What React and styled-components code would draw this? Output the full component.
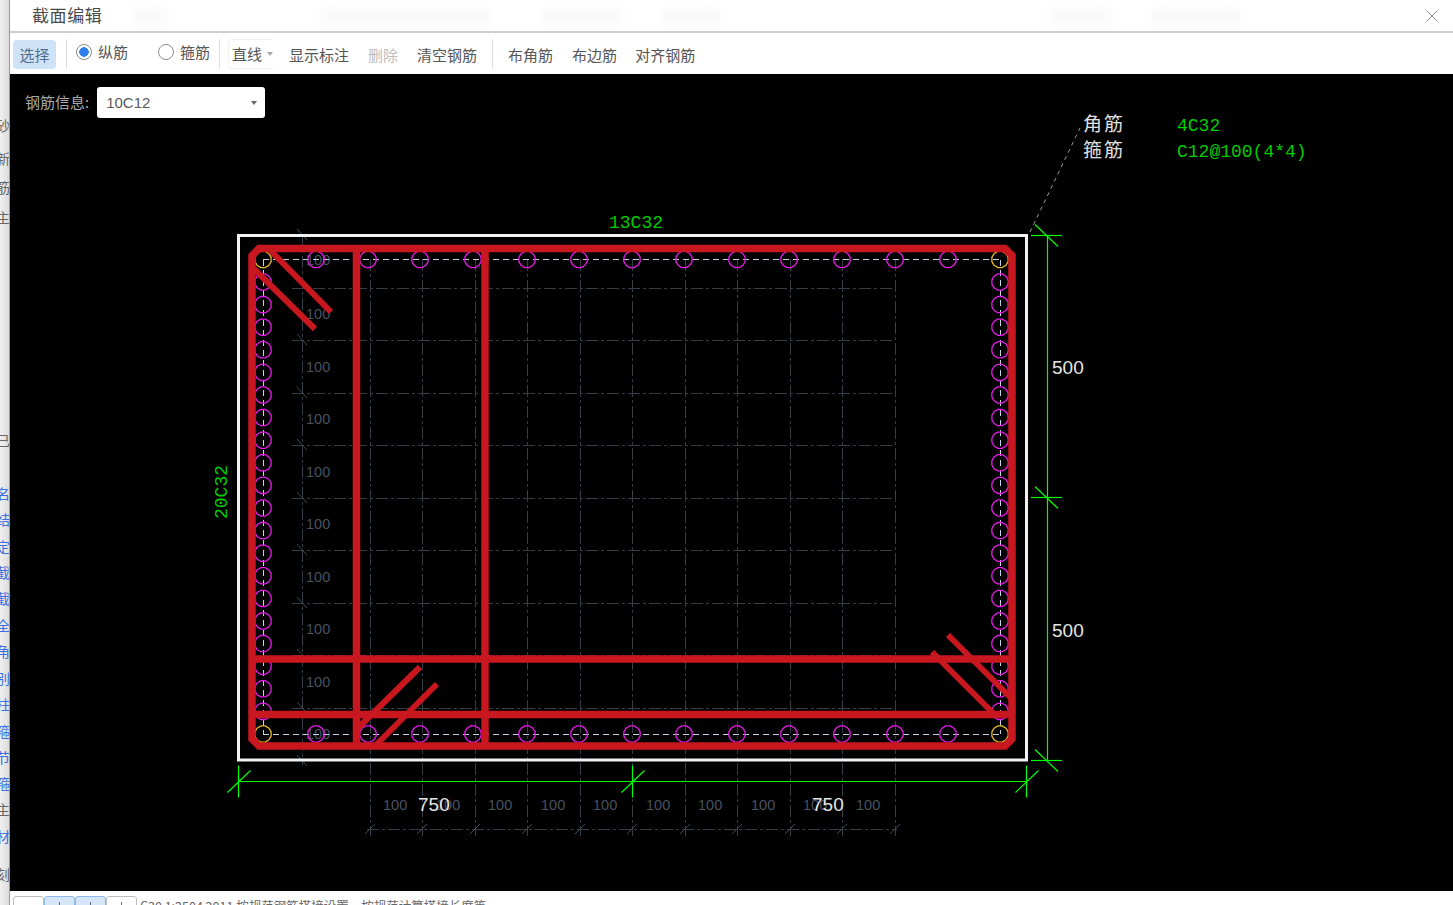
import React from "react";
import styled, { createGlobalStyle } from "styled-components";
import { X } from "lucide-react";

const cjk = `"Noto Sans CJK SC", "Noto Sans", sans-serif`;
const mono = `"Liberation Mono", "Noto Sans CJK SC", monospace`;
const sans = `"Liberation Sans", sans-serif`;

const App = () => {
  return (
    <>
      <GlobalStyle />
      <Page>
        <LeftStrip>
          {stripRows.map((row, i) => (
            <StripChar key={i} $top={row.gap} $blue={row.blue}>
              {row.ch}
            </StripChar>
          ))}
        </LeftStrip>
        <Main>
          <TitleBar>
            <Title>截面编辑</Title>
            <Ghost $ml={30} $w={34} />
            <Ghost $ml={155} $w={170} />
            <Ghost $ml={50} $w={80} />
            <Ghost $ml={40} $w={60} />
            <Ghost $ml={330} $w={60} />
            <Ghost $ml={40} $w={90} />
            <CloseButton>
              <X size={20} strokeWidth={1.1} />
            </CloseButton>
          </TitleBar>
          <Toolbar>
            <SelectButton>选择</SelectButton>
            <Separator $ml={10} />
            <RadioOption $ml={9}>
              <RadioDot $checked />
              纵筋
            </RadioOption>
            <RadioOption $ml={30}>
              <RadioDot />
              箍筋
            </RadioOption>
            <Separator $ml={9} />
            <LineSelect>
              直线
              <SmallCaret />
            </LineSelect>
            <ToolButton $ml={16}>显示标注</ToolButton>
            <ToolButton $ml={19} $disabled>
              删除
            </ToolButton>
            <ToolButton $ml={19}>清空钢筋</ToolButton>
            <Separator $ml={15} />
            <ToolButton $ml={15}>布角筋</ToolButton>
            <ToolButton $ml={19}>布边筋</ToolButton>
            <ToolButton $ml={18}>对齐钢筋</ToolButton>
          </Toolbar>
          <Canvas>
            <SectionDrawing />
            <InfoField>
              <InfoLabel>钢筋信息:</InfoLabel>
              <InfoSelect>
                10C12
                <SmallCaret $dark />
              </InfoSelect>
            </InfoField>
          </Canvas>
          <BottomBar>
            <Tab />
            <Tab $active>
              <TabMark />
            </Tab>
            <Tab $active>
              <TabMark />
            </Tab>
            <Tab>
              <TabMark />
            </Tab>
            <BottomText>C30 1:2504 2011 按规范钢筋搭接设置，按规范计算搭接长度等</BottomText>
          </BottomBar>
        </Main>
      </Page>
    </>
  );
};

export default App;

// ---- drawing data, coordinates are page pixels ----
const barX = [368, 420, 473, 527, 579, 632, 684, 737, 789, 842, 895, 948];
const gridX = [370, 422, 475, 527, 580, 632, 685, 737, 790, 842, 895];
const gridY = [288, 340, 393, 445, 498, 550, 603, 655, 708];
const labelY = [314, 367, 419, 472, 524, 577, 629, 682];
const labelX = [396, 449, 501, 554, 606, 659, 711, 764, 816, 869];
const sideY = Array.from({ length: 20 }, (_, i) => 282 + i * 22.6);

const stripRows = [
  { ch: "砂", gap: 115 },
  { ch: "新", gap: 13 },
  { ch: "筋", gap: 9 },
  { ch: "主", gap: 10 },
  { ch: "已", gap: 203 },
  { ch: "名", gap: 33, blue: true },
  { ch: "结", gap: 6, blue: true },
  { ch: "定", gap: 7, blue: true },
  { ch: "截", gap: 6, blue: true },
  { ch: "截", gap: 6, blue: true },
  { ch: "全", gap: 7, blue: true },
  { ch: "角", gap: 6, blue: true },
  { ch: "别", gap: 7, blue: true },
  { ch: "柱", gap: 6, blue: true },
  { ch: "箍", gap: 7, blue: true },
  { ch: "节", gap: 6, blue: true },
  { ch: "箍", gap: 6, blue: true },
  { ch: "主", gap: 6 },
  { ch: "材", gap: 7, blue: true },
  { ch: "刻", gap: 18 },
];

const octagon = (cx, cy, r) =>
  Array.from({ length: 12 }, (_, i) => {
    const a = (Math.PI * 2 * (i + 0.5)) / 12;
    return `${(cx + r * Math.cos(a)).toFixed(1)},${(cy + r * Math.sin(a)).toFixed(1)}`;
  }).join(" ");

const Rebar = ({ x, y, $corner }) => (
  <RebarRing $corner={$corner} points={octagon(x, y, 8.4)} />
);

const Tick = ({ x, y, vertical }) => (
  <g>
    {vertical ? (
      <DimLine x1={x} y1={y - 16} x2={x} y2={y + 16} />
    ) : (
      <DimLine x1={x - 16} y1={y} x2={x + 15} y2={y} />
    )}
    {vertical ? (
      <DimLine x1={x - 11} y1={y + 11} x2={x + 12} y2={y - 11} />
    ) : (
      <DimLine x1={x - 12} y1={y - 11} x2={x + 11} y2={y + 11} />
    )}
  </g>
);

const SectionDrawing = () => (
  <Drawing viewBox="10 74 1443 817">
    {/* grey grid with its 100 labels */}
    <GridLine x1={302} y1={235} x2={302} y2={765} />
    {gridX.map((x) => (
      <GridLine key={x} x1={x} y1={259} x2={x} y2={836} />
    ))}
    {gridY.map((y) => (
      <GridLine key={y} x1={292} y1={y} x2={895} y2={y} />
    ))}
    <GridLine x1={367} y1={829} x2={897} y2={829} />
    {[235, 340, 393, 445, 498, 550, 603, 655, 708, 761].map((y) => (
      <GridTick key={y} x1={297} y1={y - 6} x2={307} y2={y + 5} />
    ))}
    {gridX.map((x) => (
      <GridTick key={x} x1={x - 5} y1={834} x2={x + 5} y2={824} />
    ))}
    <GridText x={306} y={265}>100</GridText>
    <GridText x={306} y={739}>100</GridText>
    {labelY.map((y) => (
      <GridText key={y} x={306} y={y + 5}>100</GridText>
    ))}
    {labelX.map((x) => (
      <GridText key={x} x={x - 13} y={810}>100</GridText>
    ))}

    {/* bar centre lines and rebars */}
    <BarAxis x1={263} y1={259.5} x2={1000} y2={259.5} />
    <BarAxis x1={263} y1={734} x2={1000} y2={734} />
    <BarAxis x1={263} y1={259.5} x2={263} y2={734} />
    <BarAxis x1={1000} y1={259.5} x2={1000} y2={734} />
    {barX.map((x) => (
      <g key={x}>
        <Rebar x={x} y={259.5} />
        <Rebar x={x} y={734} />
      </g>
    ))}
    <Rebar x={316} y={259.5} />
    <Rebar x={316} y={734} />
    {sideY.map((y) => (
      <g key={y}>
        <Rebar x={263} y={y} />
        <Rebar x={1000} y={y} />
      </g>
    ))}
    <Rebar x={263} y={259.5} $corner />
    <Rebar x={1000} y={259.5} $corner />
    <Rebar x={263} y={734} $corner />
    <Rebar x={1000} y={734} $corner />

    {/* concrete outline */}
    <Outline x={238.5} y={235.5} width={788} height={524.5} />

    {/* stirrups */}
    <Stirrup d="M259 248.5 H1005 L1012 255.5 V739 L1005 746 H259 L252 739 V255.5 Z" />
    <Stirrup d="M356.5 249 V746 M485 249 V746 M252 659 H1012 M252 714.5 H1012" />
    <Hook x1={271} y1={251} x2={331} y2={312} />
    <Hook x1={254} y1={269} x2={315} y2={329} />
    <Hook x1={420} y1={667} x2={358} y2={728} />
    <Hook x1={437} y1={684} x2={376} y2={745} />
    <Hook x1={948} y1={635} x2={1011} y2={698} />
    <Hook x1={932} y1={652} x2={994} y2={714} />

    {/* dimensions */}
    <DimLine x1={238} y1={781.5} x2={1027} y2={781.5} />
    <Tick x={238.5} y={781.5} vertical />
    <Tick x={632.5} y={781.5} vertical />
    <Tick x={1026.5} y={781.5} vertical />
    <DimLine x1={1047.5} y1={235} x2={1047.5} y2={760} />
    <Tick x={1047} y={235.5} />
    <Tick x={1047} y={497.5} />
    <Tick x={1047} y={760.5} />

    <DimText x={1052} y={374}>500</DimText>
    <DimText x={1052} y={637}>500</DimText>
    <DimText x={418} y={811}>750</DimText>
    <DimText x={812} y={811}>750</DimText>
    <GreenText x={609} y={228}>13C32</GreenText>
    <GreenText transform="rotate(-90 227 519)" x={227} y={519}>20C32</GreenText>

    <Leader x1={1030} y1={232} x2={1080} y2={128} />
    <NoteText x={1083} y={131}>角筋</NoteText>
    <NoteText x={1083} y={157}>箍筋</NoteText>
    <GreenText x={1177} y={131}>4C32</GreenText>
    <GreenText x={1177} y={157}>C12@100(4*4)</GreenText>
  </Drawing>
);

// ---- page ----
const GlobalStyle = createGlobalStyle`
  html, body {
    margin: 0;
    padding: 0;
    height: 100%;
    overflow: hidden;
    background: #fff;
  }
  #root {
    height: 100%;
  }
`;

const Page = styled.div`
  display: flex;
  height: 100vh;
  font-family: ${cjk};
  color: #555;
`;

const LeftStrip = styled.div`
  width: 9px;
  flex-shrink: 0;
  overflow: hidden;
  display: flex;
  flex-direction: column;
  align-items: flex-end;
  background: linear-gradient(to right, #f0f0f0, #dcdcdc);
  border-right: 1px solid #9a9a9a;
`;

const StripChar = styled.div`
  margin-top: ${(p) => p.$top}px;
  height: 20px;
  line-height: 20px;
  font-size: 14px;
  width: 14px;
  flex-shrink: 0;
  margin-right: -1px;
  color: ${(p) => (p.$blue ? "#3c6fe0" : "#666")};
`;

const Main = styled.div`
  flex: 1;
  min-width: 0;
  display: flex;
  flex-direction: column;
`;

const TitleBar = styled.div`
  height: 31px;
  flex-shrink: 0;
  display: flex;
  align-items: center;
  padding-left: 22px;
  background: #fff;
  border-bottom: 2px solid #c9cfd4;
`;

const Title = styled.div`
  font-size: 17px;
  line-height: 20px;
  margin-top: -2px;
  letter-spacing: 0.6px;
  color: #4a4a4a;
`;

const Ghost = styled.div`
  margin-left: ${(p) => p.$ml}px;
  width: ${(p) => p.$w}px;
  height: 14px;
  background: #f9f9f9;
  filter: blur(4px);
`;

const CloseButton = styled.div`
  margin-left: auto;
  margin-right: 11px;
  display: flex;
  color: #7a7a7a;
`;

const Toolbar = styled.div`
  height: 41px;
  flex-shrink: 0;
  display: flex;
  align-items: center;
  padding: 0 0 0 3px;
  background: #fff;
  font-size: 15px;
  color: #555;
`;

const SelectButton = styled.div`
  width: 43px;
  height: 29px;
  margin-top: 2px;
  display: flex;
  align-items: center;
  justify-content: center;
  border-radius: 4px;
  background: #cfe3f8;
  color: #4e6d8c;
`;

const Separator = styled.div`
  width: 1px;
  height: 30px;
  margin-left: ${(p) => p.$ml}px;
  background: #dcdfe2;
`;

const RadioOption = styled.div`
  display: flex;
  align-items: center;
  gap: 6px;
  margin-left: ${(p) => p.$ml}px;
  margin-top: -4px;
  line-height: 20px;
  white-space: nowrap;
`;

const RadioDot = styled.span`
  box-sizing: border-box;
  width: 16px;
  height: 16px;
  border-radius: 50%;
  border: 1px solid #8c8c8c;
  background: ${(p) =>
    p.$checked ? "radial-gradient(circle, #2f80ed 0 4.5px, #fff 5px)" : "#fff"};
`;

const LineSelect = styled.div`
  display: flex;
  align-items: center;
  gap: 5px;
  height: 28px;
  margin-left: 8px;
  padding-left: 3px;
  border-radius: 4px 0 0 4px;
  border: 1px solid #f1f1f1;
  border-right: none;
`;

const SmallCaret = styled.span`
  width: 0;
  height: 0;
  border-left: 3px solid transparent;
  border-right: 3px solid transparent;
  border-top: 4px solid ${(p) => (p.$dark ? "#666" : "#aaa")};
`;

const ToolButton = styled.div`
  margin-left: ${(p) => p.$ml}px;
  margin-top: 2px;
  white-space: nowrap;
  color: ${(p) => (p.$disabled ? "#bdbdbd" : "#555")};
`;

const Canvas = styled.div`
  position: relative;
  flex: 1;
  min-height: 0;
  background: #000;
`;

const Drawing = styled.svg`
  display: block;
  width: 100%;
  height: 100%;
`;

const InfoField = styled.div`
  position: absolute;
  left: 15px;
  top: 13px;
  display: flex;
  align-items: center;
  gap: 8px;
`;

const InfoLabel = styled.span`
  font-size: 15px;
  line-height: 20px;
  margin-top: -1px;
  color: #a8a8a8;
`;

const InfoSelect = styled.div`
  box-sizing: border-box;
  width: 168px;
  height: 31px;
  padding: 0 8px 0 9px;
  display: flex;
  align-items: center;
  justify-content: space-between;
  border-radius: 3px;
  background: #fff;
  font-family: ${sans};
  font-size: 15px;
  color: #5a5a5a;
`;

const BottomBar = styled.div`
  height: 14px;
  flex-shrink: 0;
  overflow: hidden;
  display: flex;
  align-items: flex-start;
  padding: 5px 0 0 3px;
  box-sizing: border-box;
  background: #fff;
`;

const Tab = styled.div`
  box-sizing: border-box;
  width: 31px;
  height: 24px;
  flex-shrink: 0;
  display: flex;
  justify-content: center;
  padding-top: 5px;
  border: 1px solid ${(p) => (p.$active ? "#8db8ea" : "#bdbdbd")};
  border-radius: 3px 3px 0 0;
  background: ${(p) => (p.$active ? "#d6e6f9" : "#fff")};
`;

const TabMark = styled.span`
  width: 1px;
  height: 14px;
  background: #5a6f86;
`;

const BottomText = styled.div`
  margin: 2px 0 0 3px;
  font-size: 12.5px;
  line-height: 16px;
  white-space: nowrap;
  color: #666;
`;

// ---- svg parts ----
const GridLine = styled.line`
  stroke: #343e49;
  stroke-width: 1;
  stroke-dasharray: 12 3 3 3;
  shape-rendering: crispEdges;
`;

const GridTick = styled.line`
  stroke: #3f4955;
  stroke-width: 1;
`;

const GridText = styled.text`
  fill: #48525e;
  font-family: ${sans};
  font-size: 14.5px;
`;

const BarAxis = styled.line`
  stroke: #c4d4e6;
  stroke-width: 1;
  stroke-dasharray: 6 4;
  shape-rendering: crispEdges;
`;

const RebarRing = styled.polygon`
  fill: none;
  stroke: ${(p) => (p.$corner ? "#e6bc20" : "#ea18ea")};
  stroke-width: 1.3;
`;

const Outline = styled.rect`
  fill: none;
  stroke: #f2f2f2;
  stroke-width: 3;
`;

const Stirrup = styled.path`
  fill: none;
  stroke: #c8171f;
  stroke-width: 7.5;
`;

const Hook = styled.line`
  stroke: #c8171f;
  stroke-width: 6;
`;

const DimLine = styled.line`
  stroke: #00ff00;
  stroke-width: 1.2;
`;

const Leader = styled.line`
  stroke: #9a9a9a;
  stroke-width: 1;
  stroke-dasharray: 4 4;
`;

const DimText = styled.text`
  fill: #e6e6e6;
  font-family: ${sans};
  font-size: 19px;
`;

const GreenText = styled.text`
  fill: #00cc00;
  font-family: ${mono};
  font-size: 18px;
`;

const NoteText = styled.text`
  fill: #e0e0e0;
  font-family: ${cjk};
  font-size: 19px;
  letter-spacing: 2px;
`;
